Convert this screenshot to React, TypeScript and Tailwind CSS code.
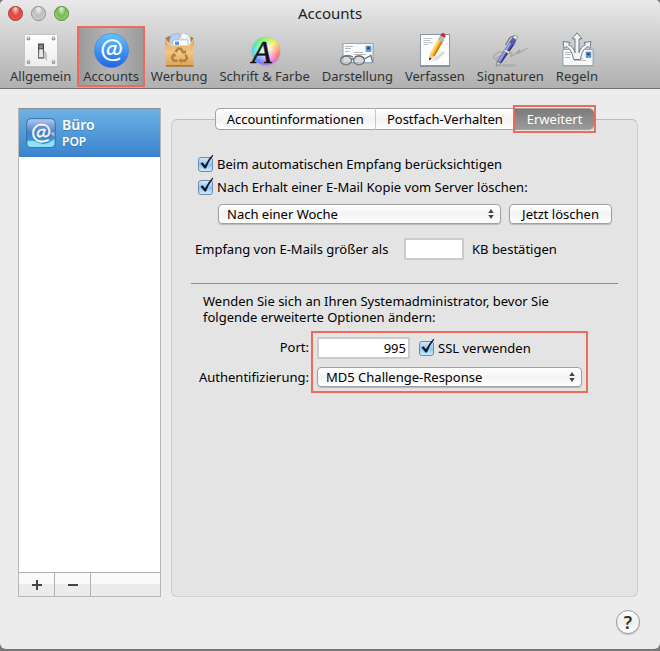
import { useState } from "react";
import type { ReactNode } from "react";

interface ToolbarItemProps {
  label: string;
  active?: boolean;
  children: ReactNode;
}

interface CheckboxProps {
  id: string;
  label: string;
}

interface PopupProps {
  id: string;
  label?: string;
  options: string[];
  className: string;
}

const TABS = ["Accountinformationen", "Postfach-Verhalten", "Erweitert"];

function SwitchIcon() {
  return (
    <svg viewBox="0 0 36 36" className="size-9">
      <defs>
        <linearGradient id="plate" x1="0" y1="0" x2="0" y2="1">
          <stop offset="0" stopColor="#fff" />
          <stop offset="1" stopColor="#ececec" />
        </linearGradient>
      </defs>
      <rect x="1.5" y="3.5" width="33.5" height="32" rx="1" fill="#9a9a9a" opacity=".6" />
      <rect x="1.5" y="2.5" width="33" height="32" rx="1" fill="url(#plate)" stroke="#c4c4c4" />
      {[[5.5, 6.5], [30.5, 6.5], [5.5, 30], [30.5, 30]].map(([x, y]) => (
        <g key={`${x}-${y}`}>
          <circle cx={x} cy={y} r="1.9" fill="#8f8f8f" />
          <circle cx={x} cy={y - 0.4} r="1" fill="#e2e2e2" />
        </g>
      ))}
      <path d="M20 25l4 4v-8l-3-3z" fill="#c4c4c4" />
      <rect x="15" y="11.5" width="6" height="15" fill="#4a4a4a" />
      <rect x="16.2" y="12.8" width="3.6" height="3.5" fill="#8d8d8d" />
      <path d="M16 17h4l.8 8.500h-5.300z" fill="#e6e6e6" stroke="#666" strokeWidth=".6" />
    </svg>
  );
}

function AtIcon() {
  return (
    <svg viewBox="0 0 36 36" className="size-9">
      <defs>
        <linearGradient id="at-ball" x1="0" y1="0" x2="0" y2="1">
          <stop offset="0" stopColor="#62c4fb" />
          <stop offset="1" stopColor="#2065e6" />
        </linearGradient>
      </defs>
      <circle cx="18.5" cy="18.5" r="17" fill="url(#at-ball)" stroke="#3d7fd3" strokeWidth=".6" />
      <text x="18.5" y="26" fontSize="27" textAnchor="middle" fill="#fff" stroke="#fff" strokeWidth=".2" fontFamily="Lato, sans-serif">@</text>
    </svg>
  );
}

function BagIcon() {
  return (
    <svg viewBox="0 0 36 36" className="size-9">
      <defs>
        <linearGradient id="bag" x1="0" y1="0" x2="0" y2="1">
          <stop offset="0" stopColor="#e3a85a" />
          <stop offset=".5" stopColor="#f3c681" />
          <stop offset="1" stopColor="#dda252" />
        </linearGradient>
      </defs>
      <path d="M4.500 6l4-2h20l4 2v7h-28z" fill="#b07a38" />
      <path d="M7 14L10 3l8-2 4 12z" fill="#b9cdf2" stroke="#8ea9d8" strokeWidth=".6" />
      <path d="M17 9l5-8.500 7 4 1 9.500H18z" fill="#f6f8fb" stroke="#b8bec8" strokeWidth=".6" />
      <path d="M19 6l5 2 4-3" fill="none" stroke="#c4c9d1" strokeWidth=".8" />
      <rect x="12" y="8" width="15" height="8" fill="#fff" stroke="#9eb4cf" strokeWidth=".7" />
      <rect x="14" y="9.500" width="4" height="4" fill="#5f93dd" />
      <path d="M4.500 7L9 13h19l4.500-6v27h-28z" fill="url(#bag)" />
      <path d="M5 34h27.500" stroke="#9b7038" strokeWidth="1.400" />
      <path d="M4.500 7L9 13.500h19L32.500 7" fill="none" stroke="#f8dba8" strokeWidth=".8" />
      <g fill="none" stroke="#b0824a" strokeWidth="2.400">
        <path d="M14.500 20l2.500-3.200h3l2.500 4" />
        <path d="M24.500 22.500l1.500 3.500-2 2.800h-4.500" />
        <path d="M16.500 28.800h-3.500l-2-2.800 1.500-3" />
      </g>
      <path d="M20.500 21.500h4.500v-4zM20.500 26v5.500l-3.300-2.700zM10 24.500l3-4 2.500 4z" fill="#b0824a" />
    </svg>
  );
}

function FontColorIcon() {
  return (
    <div className="relative size-9">
      <div className="absolute left-[5px] top-[5px] size-7 rounded-full bg-[radial-gradient(circle,#fff_0%,#fff8_35%,transparent_70%),conic-gradient(#8df35a,#f6ee55_12%,#ffb05c_20%,#ff6470_30%,#f65fc8_40%,#a66bff_50%,#5b73ff_60%,#4bd5f5_72%,#3fef8a_85%,#8df35a)] shadow-sm" />
      <svg viewBox="0 0 36 36" className="absolute inset-0 size-9 overflow-visible">
        <text x="5" y="31" fontSize="32" fontStyle="italic" fontWeight="400" fontFamily="Liberation Serif, serif" fill="#111" stroke="#111" strokeWidth=".6">A</text>
      </svg>
    </div>
  );
}

function Letter({ y, h }: { y: number; h: number }) {
  return (
    <g>
      <rect x="3.500" y={y + 1} width="31" height={h} fill="#7a8b9a" opacity=".5" />
      <rect x="4" y={y} width="30" height={h} fill="#f8fafc" stroke="#8fa9bf" />
      <rect x="27" y={y + 2.5} width="5" height="5.500" fill="#6d9ed6" stroke="#3f6ea5" strokeWidth=".5" />
      <circle cx="29.500" cy={y + 4.7} r="1.300" fill="#1d3f70" />
      <path d={`M6 ${y + 3}h8M6 ${y + 5}h6M6 ${y + 8}h5M15 ${y + 9}h9M15 ${y + 11}h12`} stroke="#a3a9af" strokeWidth=".8" />
    </g>
  );
}

function GlassesIcon() {
  return (
    <svg viewBox="0 0 36 36" className="size-9">
      <Letter y={11.5} h={19} />
      <g fill="#c9cdd0" fillOpacity=".7" stroke="#77797b" strokeWidth="1.300">
        <ellipse cx="7" cy="28.500" rx="5.500" ry="4.300" />
        <ellipse cx="20" cy="28.500" rx="5.500" ry="4.300" />
      </g>
      <path d="M12 27.500q1.500-1.500 3 0M2 26Q7 22 14 25M25 27l7-3.500 1.500 6.500M25 26q-4-3.500-9-1" fill="none" stroke="#696c6f" strokeWidth="1.200" />
    </svg>
  );
}

function PencilIcon() {
  return (
    <svg viewBox="0 0 36 36" className="size-9">
      <rect x="3" y="3" width="30" height="32" fill="#6f7d89" opacity=".7" />
      <rect x="3.500" y="2.500" width="29" height="31" fill="#fdfdfd" stroke="#8999a6" />
      <path d="M6.500 6.500h9M6.500 8.500h7M6.500 10.500h9M6.500 12.500h5" stroke="#b0b4b8" strokeWidth=".8" />
      <path d="M14 29l12-10 2 2-8 7z" fill="#ccc" opacity=".7" />
      <path d="M12 28.500l1-6.500L22.500 5l4.500 2.500-9.500 17z" fill="#f5b52b" />
      <path d="M13 22l9.500-17 1.600 1L14.500 23z" fill="#ffdf67" />
      <path d="M16 23.900l9.400-17 1.600.9-9.500 16.700z" fill="#d27d17" />
      <path d="M13 22l4.500 2.500-5.500 4z" fill="#e9cda1" />
      <path d="M12 28.500l.4-3 2.200 1.200z" fill="#222" />
      <path d="M21 7.700L23.500 3l4.500 2.500-2.700 4.700z" fill="#aeb9c4" />
      <path d="M23.300 3.500q1-3 3.200-2.500 3 1.200 1.500 4.800z" fill="#d9262a" />
    </svg>
  );
}

function PenIcon() {
  return (
    <svg viewBox="0 0 36 36" className="size-9">
      <path d="M3 27c-5-3 4-8 7-7s-4 10-6 8 12-8 15-7-3 5 1 3 8-7 8-6-5 5-1 3 6-4 9-5" fill="none" stroke="#a5a5a5" strokeWidth="1.100" />
      <ellipse cx="15" cy="33.500" rx="10" ry="1.500" fill="#999" opacity=".4" />
      <path d="M4 34l1-4.500L18 9l4.500-6 3 1.800-2.500 7L9 31z" fill="#565ab0" />
      <path d="M6 29L17.500 10.500l1.600 1L8 30z" fill="#9da1e5" />
      <path d="M21.500 13.500L9.500 31l-1-.8 12-17.500z" fill="#303173" />
      <path d="M4 34l1-4.500 4 2z" fill="#d4d4d4" stroke="#666" strokeWidth=".5" />
      <path d="M13 17l5 3-1.200 2-5-3zM20.500 5.500l4 2.400 1.200-3-2.800-2z" fill="#e3e3e8" stroke="#777" strokeWidth=".5" />
      <path d="M22 4l-4 1.500-4.500 7.500" fill="none" stroke="#777" strokeWidth="1.300" />
    </svg>
  );
}

function RulesIcon() {
  return (
    <svg viewBox="0 0 36 36" className="size-9">
      <Letter y={17.5} h={16} />
      <path
        d="M18 .8l5 6h-3v14c1-4 3-6.500 6.500-8l-1.500-2.300 7-1-1 7-2-2c-4 2-6.500 6-7.500 13h-7c-1-7-3.500-11-7.500-13l-2 2-1-7 7 1-1.500 2.300c3.500 1.500 5.500 4 6.500 8v-14h-3z"
        fill="#f3f5f7" stroke="#6e7b87" strokeWidth="1" strokeLinejoin="round"
      />
    </svg>
  );
}

function ToolbarItem({ label, active, children }: ToolbarItemProps) {
  return (
    <button
      aria-pressed={active}
      className={`relative flex flex-col items-center px-1.5 pt-1.5 pb-[3px] text-[13px] leading-4 text-[#333] ${
        active ? "bg-linear-to-r from-[#999] via-[#b5b5b5] to-[#999]" : ""
      }`}
    >
      {children}
      <span className="whitespace-nowrap">{label}</span>
      {active && <span className="absolute inset-0 border-2 border-[#ee6a5b]" />}
    </button>
  );
}

function Checkbox({ id, label }: CheckboxProps) {
  return (
    <div className="flex items-center gap-1">
      <span className="relative flex">
        <input
          id={id}
          type="checkbox"
          defaultChecked
          className="peer size-[15px] appearance-none rounded-[3px] border border-[#7189a5] bg-linear-to-b from-[#d5e9fa] via-[#8fc2f0] to-[#c9eeff]"
        />
        <svg viewBox="0 0 16 18" className="pointer-events-none absolute -top-[3px] left-px hidden h-[18px] w-4 peer-checked:block">
          <path d="M1.500 9.500l2-1.200 2.500 3Q9 5 13.500.800l.8.700Q9.500 7.500 7 14.500H5.500z" fill="#0b1830" />
        </svg>
      </span>
      <label htmlFor={id}>{label}</label>
    </div>
  );
}

function Popup({ id, label, options, className }: PopupProps) {
  return (
    <div className={`relative ${className}`}>
      <select
        id={id}
        aria-label={label}
        className="block h-5 w-full appearance-none rounded-[4px] border border-[#a0a0a0] bg-linear-to-b from-white via-[#f3f3f3] to-white pl-2 leading-4 shadow-[0_1px_1px_#0003]"
      >
        {options.map((option) => (
          <option key={option}>{option}</option>
        ))}
      </select>
      <svg viewBox="0 0 6 10" className="pointer-events-none absolute right-[7px] top-[5px] h-2.5 w-1.5">
        <path d="M3 0l2.700 4H.3zM3 10L.3 6h5.400z" fill="#444" />
      </svg>
    </div>
  );
}

export default function App() {
  const [tab, setTab] = useState("Erweitert");

  return (
    <div className="min-h-screen bg-[#777] pb-0.5 font-['Noto_Sans','Open_Sans',sans-serif] text-[13px] leading-4 text-black">
      <div className="flex min-h-[calc(100vh-2px)] flex-col rounded-b-md rounded-t-[5px] bg-[#ececec]">
        <header className="rounded-t-[5px] border-b border-[#6f6f6f] bg-linear-to-b from-[#e9e9e9] to-[#b0b0b0] pb-px">
          <div className="relative flex h-[26px] items-center justify-center">
            <div className="absolute left-2 flex gap-2">
              <button aria-label="Schließen" className="size-[15px] rounded-full border border-[#8d3a38] bg-[radial-gradient(ellipse_at_50%_15%,#fbd0cb,#e2463f_45%,#f0625a)]" />
              <button aria-label="Minimieren" className="size-[15px] rounded-full border border-[#8c8c8c] bg-[radial-gradient(ellipse_at_50%_15%,#f5f5f5,#bdbdbd_45%,#dedede)]" />
              <button aria-label="Zoomen" className="size-[15px] rounded-full border border-[#5c8447] bg-[radial-gradient(ellipse_at_50%_15%,#e0f5d2,#75ba53_45%,#a9e285)]" />
            </div>
            <h1 className="text-[15px] text-[#222]">Accounts</h1>
          </div>
          <nav className="flex pl-1">
            <ToolbarItem label="Allgemein"><SwitchIcon /></ToolbarItem>
            <ToolbarItem label="Accounts" active><AtIcon /></ToolbarItem>
            <ToolbarItem label="Werbung"><BagIcon /></ToolbarItem>
            <ToolbarItem label="Schrift & Farbe"><FontColorIcon /></ToolbarItem>
            <ToolbarItem label="Darstellung"><GlassesIcon /></ToolbarItem>
            <ToolbarItem label="Verfassen"><PencilIcon /></ToolbarItem>
            <ToolbarItem label="Signaturen"><PenIcon /></ToolbarItem>
            <ToolbarItem label="Regeln"><RulesIcon /></ToolbarItem>
          </nav>
        </header>

        <main className="flex flex-1 gap-2.5 pt-[19px] pr-[22px] pl-[18px]">
          <aside className="flex w-[143px] shrink-0 flex-col border border-[#b8b8b8] border-t-[#8e8e8e] bg-white">
            <button className="flex h-12 items-center gap-1.5 bg-linear-to-b from-[#6cb1e5] to-[#3a83cd] px-[7px] text-left font-semibold text-white text-shadow-xs">
              <svg viewBox="0 0 30 30" className="size-[30px]">
                <defs>
                  <linearGradient id="account" x1="0" y1="0" x2="0" y2="1">
                    <stop offset="0" stopColor="#b4c9ef" />
                    <stop offset=".5" stopColor="#3d7fc9" />
                    <stop offset="1" stopColor="#36b6e6" />
                  </linearGradient>
                </defs>
                <rect x=".7" y=".7" width="28.600" height="28.600" rx="4" fill="url(#account)" stroke="#3b6ea6" />
                <path d="M1.500 23q8-1 13 2t14-4v4q0 4-4 4H5q-3.500 0-3.500-3z" fill="#8ee2f5" />
                <path d="M24 15l4.500-1v5z" fill="#b8b4df" />
                <text x="15" y="21.500" fontSize="24" fontWeight="400" textAnchor="middle" fill="#fff" stroke="#fff" strokeWidth=".4" fontFamily="Lato, sans-serif">@</text>
              </svg>
              <span className="flex flex-col gap-px">
                <span className="text-sm leading-4">Büro</span>
                <span className="text-xs leading-4">POP</span>
              </span>
            </button>
            <div className="mt-auto flex h-6 border-t border-[#b0b0b0] bg-linear-to-b from-[#fafafa] from-50% to-[#ececec] to-50%">
              <button aria-label="Account hinzufügen" className="flex w-9 items-center justify-center border-r border-[#b0b0b0]">
                <svg viewBox="0 0 10 10" className="size-2.5"><path d="M5 0v10M0 5h10" stroke="#444" strokeWidth="2" /></svg>
              </button>
              <button aria-label="Account entfernen" className="flex w-9 items-center justify-center border-r border-[#b0b0b0]">
                <svg viewBox="0 0 10 10" className="size-2.5"><path d="M0 5h10" stroke="#444" strokeWidth="2" /></svg>
              </button>
            </div>
          </aside>

          <section className="mt-[11px] flex-1 rounded-md border border-[#cfcfcf] border-t-[#bdbdbd] bg-[#e4e4e4] px-[19px]">
            <div className="-mt-3 flex justify-center" role="tablist">
              {TABS.map((name) => (
                <button
                  key={name}
                  role="tab"
                  aria-selected={tab === name}
                  onClick={() => setTab(name)}
                  className={`relative h-[22px] whitespace-nowrap border-y border-[#a3a3a3] px-[11px] first:rounded-l-[5px] first:border-l last:rounded-r-[5px] last:px-3 ${
                    tab === name
                      ? "bg-linear-to-b from-[#7b7b7b] to-[#9a9a9a] text-white"
                      : "border-r border-r-[#c8c8c8] bg-linear-to-b from-white via-[#f2f2f2] to-white"
                  }`}
                >
                  {name}
                  {name === "Erweitert" && <span className="absolute -inset-x-0.5 -inset-y-1 border-2 border-[#ee6a5b]" />}
                </button>
              ))}
            </div>

            <div className="mt-[26px] flex flex-col gap-[7px] pl-[7px]">
              <Checkbox id="auto" label="Beim automatischen Empfang berücksichtigen" />
              <Checkbox id="remove" label="Nach Erhalt einer E-Mail Kopie vom Server löschen:" />
            </div>
            <div className="mt-[9px] flex items-center gap-2 pl-[27px]">
              <Popup id="period" label="Zeitraum" options={["Nach einer Woche"]} className="w-[283px]" />
              <button className="h-5 w-[103px] rounded-[4px] border border-[#a0a0a0] bg-linear-to-b from-white via-[#f3f3f3] to-white leading-4 shadow-[0_1px_1px_#0003]">
                Jetzt löschen
              </button>
            </div>
            <div className="mt-3.5 flex items-center pl-1">
              <label htmlFor="size" className="w-[209px]">Empfang von E-Mails größer als</label>
              <input id="size" className="mr-2 h-[22px] w-[60px] border-2 border-[#cbcbcb] bg-white px-1 text-right" />
              <span>KB bestätigen</span>
            </div>

            <hr className="mt-[23px] border-[#8e8e8e]" />

            <p className="mt-[9px] max-w-[370px] pl-3">
              Wenden Sie sich an Ihren Systemadministrator, bevor Sie folgende erweiterte Optionen ändern:
            </p>
            <div className="mt-1.5 flex gap-0.5">
              <div className="flex w-[118px] flex-col items-end gap-2.5 whitespace-nowrap pt-1.5">
                <label htmlFor="port" className="leading-5">Port:</label>
                <label htmlFor="auth" className="leading-5">Authentifizierung:</label>
              </div>
              <div className="flex flex-col gap-2 border-2 border-[#ee6a5b] p-1">
                <div className="flex items-center gap-[9px]">
                  <input id="port" defaultValue="995" className="h-[22px] w-[93px] border-2 border-[#cbcbcb] bg-white px-0.5 text-right" />
                  <Checkbox id="ssl" label="SSL verwenden" />
                </div>
                <Popup id="auth" options={["MD5 Challenge-Response"]} className="w-[265px]" />
              </div>
            </div>
          </section>
        </main>

        <footer className="flex justify-end px-5 pt-[13px] pb-[15px]">
          <button aria-label="Hilfe" className="size-6 rounded-full border border-[#999] bg-linear-to-b from-white via-[#eee] to-white text-lg font-semibold leading-5 text-[#333] shadow-[0_1px_1px_#0003]">
            ?
          </button>
        </footer>
      </div>
    </div>
  );
}
